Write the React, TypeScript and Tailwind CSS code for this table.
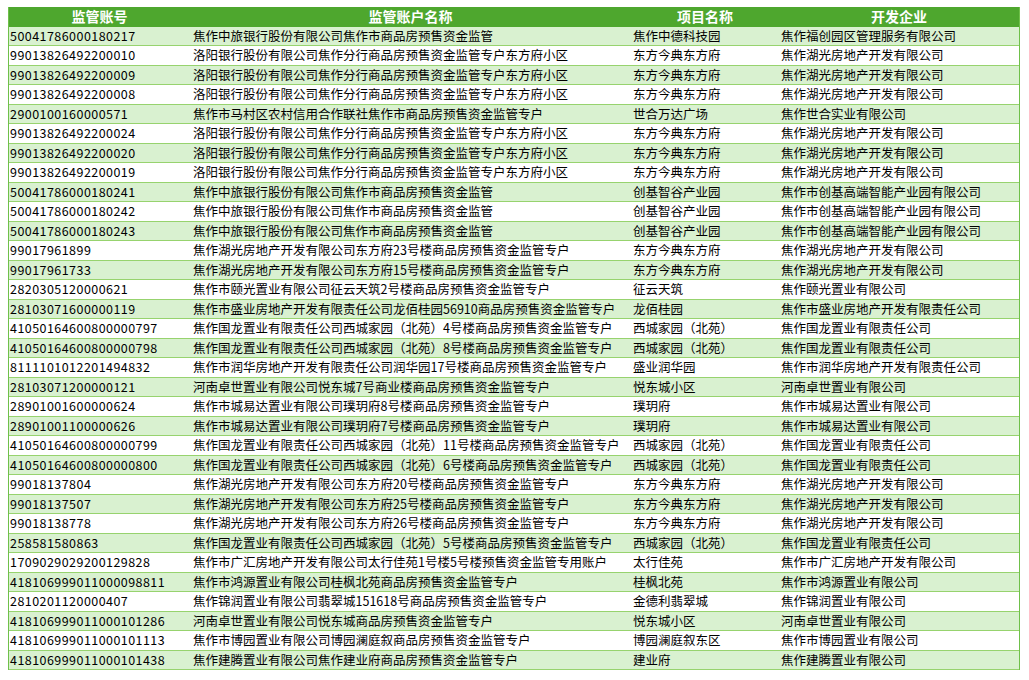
const rows: [string, string, string, string][] = [
  ["50041786000180217", "焦作中旅银行股份有限公司焦作市商品房预售资金监管", "焦作中德科技园", "焦作福创园区管理服务有限公司"],
  ["99013826492200010", "洛阳银行股份有限公司焦作分行商品房预售资金监管专户东方府小区", "东方今典东方府", "焦作湖光房地产开发有限公司"],
  ["99013826492200009", "洛阳银行股份有限公司焦作分行商品房预售资金监管专户东方府小区", "东方今典东方府", "焦作湖光房地产开发有限公司"],
  ["99013826492200008", "洛阳银行股份有限公司焦作分行商品房预售资金监管专户东方府小区", "东方今典东方府", "焦作湖光房地产开发有限公司"],
  ["2900100160000571", "焦作市马村区农村信用合作联社焦作市商品房预售资金监管专户", "世合万达广场", "焦作世合实业有限公司"],
  ["99013826492200024", "洛阳银行股份有限公司焦作分行商品房预售资金监管专户东方府小区", "东方今典东方府", "焦作湖光房地产开发有限公司"],
  ["99013826492200020", "洛阳银行股份有限公司焦作分行商品房预售资金监管专户东方府小区", "东方今典东方府", "焦作湖光房地产开发有限公司"],
  ["99013826492200019", "洛阳银行股份有限公司焦作分行商品房预售资金监管专户东方府小区", "东方今典东方府", "焦作湖光房地产开发有限公司"],
  ["50041786000180241", "焦作中旅银行股份有限公司焦作市商品房预售资金监管", "创基智谷产业园", "焦作市创基高端智能产业园有限公司"],
  ["50041786000180242", "焦作中旅银行股份有限公司焦作市商品房预售资金监管", "创基智谷产业园", "焦作市创基高端智能产业园有限公司"],
  ["50041786000180243", "焦作中旅银行股份有限公司焦作市商品房预售资金监管", "创基智谷产业园", "焦作市创基高端智能产业园有限公司"],
  ["99017961899", "焦作湖光房地产开发有限公司东方府23号楼商品房预售资金监管专户", "东方今典东方府", "焦作湖光房地产开发有限公司"],
  ["99017961733", "焦作湖光房地产开发有限公司东方府15号楼商品房预售资金监管专户", "东方今典东方府", "焦作湖光房地产开发有限公司"],
  ["2820305120000621", "焦作市颐光置业有限公司征云天筑2号楼商品房预售资金监管专户", "征云天筑", "焦作颐光置业有限公司"],
  ["28103071600000119", "焦作市盛业房地产开发有限责任公司龙佰桂园56910商品房预售资金监管专户", "龙佰桂园", "焦作市盛业房地产开发有限责任公司"],
  ["41050164600800000797", "焦作国龙置业有限责任公司西城家园（北苑）4号楼商品房预售资金监管专户", "西城家园（北苑）", "焦作国龙置业有限责任公司"],
  ["41050164600800000798", "焦作国龙置业有限责任公司西城家园（北苑）8号楼商品房预售资金监管专户", "西城家园（北苑）", "焦作国龙置业有限责任公司"],
  ["8111101012201494832", "焦作市润华房地产开发有限责任公司润华园17号楼商品房预售资金监管专户", "盛业润华园", "焦作市润华房地产开发有限责任公司"],
  ["28103071200000121", "河南卓世置业有限公司悦东城7号商业楼商品房预售资金监管专户", "悦东城小区", "河南卓世置业有限公司"],
  ["28901001600000624", "焦作市城易达置业有限公司璞玥府8号楼商品房预售资金监管专户", "璞玥府", "焦作市城易达置业有限公司"],
  ["28901001100000626", "焦作市城易达置业有限公司璞玥府7号楼商品房预售资金监管专户", "璞玥府", "焦作市城易达置业有限公司"],
  ["41050164600800000799", "焦作国龙置业有限责任公司西城家园（北苑）11号楼商品房预售资金监管专户", "西城家园（北苑）", "焦作国龙置业有限责任公司"],
  ["41050164600800000800", "焦作国龙置业有限责任公司西城家园（北苑）6号楼商品房预售资金监管专户", "西城家园（北苑）", "焦作国龙置业有限责任公司"],
  ["99018137804", "焦作湖光房地产开发有限公司东方府20号楼商品房预售资金监管专户", "东方今典东方府", "焦作湖光房地产开发有限公司"],
  ["99018137507", "焦作湖光房地产开发有限公司东方府25号楼商品房预售资金监管专户", "东方今典东方府", "焦作湖光房地产开发有限公司"],
  ["99018138778", "焦作湖光房地产开发有限公司东方府26号楼商品房预售资金监管专户", "东方今典东方府", "焦作湖光房地产开发有限公司"],
  ["258581580863", "焦作国龙置业有限责任公司西城家园（北苑）5号楼商品房预售资金监管专户", "西城家园（北苑）", "焦作国龙置业有限责任公司"],
  ["1709029029200129828", "焦作市广汇房地产开发有限公司太行佳苑1号楼5号楼预售资金监管专用账户", "太行佳苑", "焦作市广汇房地产开发有限公司"],
  ["418106999011000098811", "焦作市鸿源置业有限公司桂枫北苑商品房预售资金监管专户", "桂枫北苑", "焦作市鸿源置业有限公司"],
  ["2810201120000407", "焦作锦润置业有限公司翡翠城151618号商品房预售资金监管专户", "金德利翡翠城", "焦作锦润置业有限公司"],
  ["418106999011000101286", "河南卓世置业有限公司悦东城商品房预售资金监管专户", "悦东城小区", "河南卓世置业有限公司"],
  ["418106999011000101113", "焦作市博园置业有限公司博园澜庭叙商品房预售资金监管专户", "博园澜庭叙东区", "焦作市博园置业有限公司"],
  ["418106999011000101438", "焦作建腾置业有限公司焦作建业府商品房预售资金监管专户", "建业府", "焦作建腾置业有限公司"],
];

const headers = ["监管账号", "监管账户名称", "项目名称", "开发企业"];

export default function App() {
  return (
    <div className="min-h-[680px] bg-white pt-[7px] pl-[8px] font-['Noto_Sans_CJK_SC','Noto_Sans',sans-serif] text-black">
      <div className="w-[1012px] border-x border-[#6fc04a]">
        {/* header */}
        <div className="grid h-[19.5px] grid-cols-[181px_441px_148px_240px] bg-[#4ea72e] text-[14px] font-bold leading-[19.5px] text-white">
          {headers.map((h) => (
            <div key={h} className="text-center">
              {h}
            </div>
          ))}
        </div>

        {rows.map((r, i) => (
          <div
            key={i}
            className={
              "grid h-[19.5px] grid-cols-[181px_441px_148px_240px] items-center border-b border-[#97d36e] text-[12.5px] leading-none whitespace-nowrap " +
              (i % 2 === 0 ? "bg-[#d9f1d0]" : "bg-white")
            }
          >
            <div className="pl-[1px] tracking-[0.45px]">{r[0]}</div>
            <div className="pl-[3px]">{r[1]}</div>
            <div className="pl-[2px]">{r[2]}</div>
            <div className="pl-[2px]">{r[3]}</div>
          </div>
        ))}
      </div>
    </div>
  );
}
